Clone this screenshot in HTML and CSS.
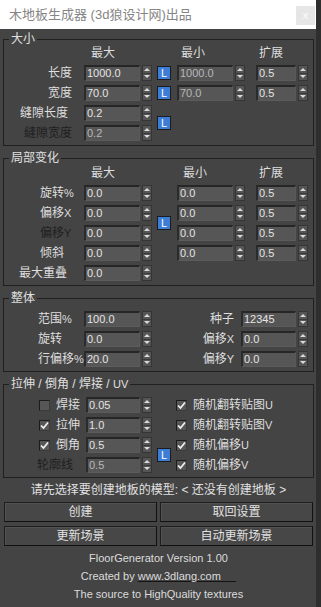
FILE: index.html
```html
<!DOCTYPE html>
<html lang="zh">
<head>
    <meta charset="UTF-8">
    <meta name="viewport" content="width=device-width, initial-scale=1.0">
    <title>木地板生成器</title>
    <link rel="stylesheet" href="styles.css">
</head>
<body>
    <div class="window">
        <div class="titlebar">
            <span class="title">木地板生成器 (3d狼设计网)出品</span>
            <span class="close">x</span>
        </div>

        <div class="panel">
            <!-- 大小 -->
            <fieldset class="group">
                <legend>大小</legend>
                <div class="grid cols-a first">
                    <span class="lbl"></span>
                    <span class="head c2">最大</span>
                    <span class="head c4">最小</span>
                    <span class="head c5">扩展</span>

                    <span class="lbl">长度</span>
                    <div class="spin"><span class="field">1000.0</span><span class="arrows"><i class="up"></i><i class="dn"></i></span></div>
                    <span class="lock">L</span>
                    <div class="spin"><span class="field dim">1000.0</span><span class="arrows"><i class="up"></i><i class="dn"></i></span></div>
                    <div class="spin narrow"><span class="field">0.5</span><span class="arrows"><i class="up"></i><i class="dn"></i></span></div>

                    <span class="lbl">宽度</span>
                    <div class="spin"><span class="field">70.0</span><span class="arrows"><i class="up"></i><i class="dn"></i></span></div>
                    <span class="lock">L</span>
                    <div class="spin"><span class="field dim">70.0</span><span class="arrows"><i class="up"></i><i class="dn"></i></span></div>
                    <div class="spin narrow"><span class="field">0.5</span><span class="arrows"><i class="up"></i><i class="dn"></i></span></div>

                    <span class="lbl shift">缝隙长度</span>
                    <div class="spin"><span class="field">0.2</span><span class="arrows"><i class="up"></i><i class="dn"></i></span></div>
                    <span class="lock span2">L</span>

                    <span class="lbl off">缝隙宽度</span>
                    <div class="spin"><span class="field dim">0.2</span><span class="arrows"><i class="up"></i><i class="dn"></i></span></div>
                </div>
            </fieldset>

            <!-- 局部变化 -->
            <fieldset class="group">
                <legend>局部变化</legend>
                <div class="grid cols-a second">
                    <span class="lbl"></span>
                    <span class="head c2">最大</span>
                    <span class="head c4 h2">最小</span>
                    <span class="head c5">扩展</span>

                    <span class="lbl left">旋转<span class="lat">%</span></span>
                    <div class="spin"><span class="field">0.0</span><span class="arrows"><i class="up"></i><i class="dn"></i></span></div>
                    <div class="spin c4"><span class="field">0.0</span><span class="arrows"><i class="up"></i><i class="dn"></i></span></div>
                    <div class="spin narrow"><span class="field">0.5</span><span class="arrows"><i class="up"></i><i class="dn"></i></span></div>

                    <span class="lbl left">偏移<span class="lat">X</span></span>
                    <div class="spin"><span class="field">0.0</span><span class="arrows"><i class="up"></i><i class="dn"></i></span></div>
                    <span class="lock span2">L</span>
                    <div class="spin"><span class="field">0.0</span><span class="arrows"><i class="up"></i><i class="dn"></i></span></div>
                    <div class="spin narrow"><span class="field">0.5</span><span class="arrows"><i class="up"></i><i class="dn"></i></span></div>

                    <span class="lbl left off">偏移<span class="lat">Y</span></span>
                    <div class="spin"><span class="field">0.0</span><span class="arrows"><i class="up"></i><i class="dn"></i></span></div>
                    <div class="spin c4"><span class="field">0.0</span><span class="arrows"><i class="up"></i><i class="dn"></i></span></div>
                    <div class="spin narrow"><span class="field">0.5</span><span class="arrows"><i class="up"></i><i class="dn"></i></span></div>

                    <span class="lbl left">倾斜</span>
                    <div class="spin"><span class="field">0.0</span><span class="arrows"><i class="up"></i><i class="dn"></i></span></div>
                    <div class="spin c4"><span class="field">0.0</span><span class="arrows"><i class="up"></i><i class="dn"></i></span></div>
                    <div class="spin narrow"><span class="field">0.5</span><span class="arrows"><i class="up"></i><i class="dn"></i></span></div>

                    <span class="lbl left wide">最大重叠</span>
                    <div class="spin"><span class="field">0.0</span><span class="arrows"><i class="up"></i><i class="dn"></i></span></div>
                </div>
            </fieldset>

            <!-- 整体 -->
            <fieldset class="group">
                <legend>整体</legend>
                <div class="grid cols-b">
                    <span class="lbl left2">范围<span class="lat">%</span></span>
                    <div class="spin"><span class="field">100.0</span><span class="arrows"><i class="up"></i><i class="dn"></i></span></div>
                    <span class="rlbl">种子</span>
                    <div class="spin mid"><span class="field">12345</span><span class="arrows"><i class="up"></i><i class="dn"></i></span></div>

                    <span class="lbl left2">旋转</span>
                    <div class="spin"><span class="field">0.0</span><span class="arrows"><i class="up"></i><i class="dn"></i></span></div>
                    <span class="rlbl">偏移<span class="lat">X</span></span>
                    <div class="spin mid"><span class="field">0.0</span><span class="arrows"><i class="up"></i><i class="dn"></i></span></div>

                    <span class="lbl left2">行偏移<span class="lat">%</span></span>
                    <div class="spin"><span class="field">20.0</span><span class="arrows"><i class="up"></i><i class="dn"></i></span></div>
                    <span class="rlbl">偏移<span class="lat">Y</span></span>
                    <div class="spin mid"><span class="field">0.0</span><span class="arrows"><i class="up"></i><i class="dn"></i></span></div>
                </div>
            </fieldset>

            <!-- 拉伸 / 倒角 / 焊接 / UV -->
            <fieldset class="group">
                <legend>拉伸 / 倒角 / 焊接 / <span class="lat">UV</span></legend>
                <div class="grid cols-c">
                    <span class="opt"><span class="chk"></span><span>焊接</span></span>
                    <div class="spin short"><span class="field">0.05</span><span class="arrows"><i class="up"></i><i class="dn"></i></span></div>
                    <span class="opt right"><span class="chk"><svg width="9" height="9" viewBox="0 0 9 9"><path d="M1 4.5 L3.5 7 L8 1.5" fill="none" stroke="#f2f2f2" stroke-width="1.7"/></svg></span><span>随机翻转贴图<span class="lat">U</span></span></span>

                    <span class="opt"><span class="chk"><svg width="9" height="9" viewBox="0 0 9 9"><path d="M1 4.5 L3.5 7 L8 1.5" fill="none" stroke="#f2f2f2" stroke-width="1.7"/></svg></span><span>拉伸</span></span>
                    <div class="spin short"><span class="field">1.0</span><span class="arrows"><i class="up"></i><i class="dn"></i></span></div>
                    <span class="opt right"><span class="chk"><svg width="9" height="9" viewBox="0 0 9 9"><path d="M1 4.5 L3.5 7 L8 1.5" fill="none" stroke="#f2f2f2" stroke-width="1.7"/></svg></span><span>随机翻转贴图<span class="lat">V</span></span></span>

                    <span class="opt"><span class="chk"><svg width="9" height="9" viewBox="0 0 9 9"><path d="M1 4.5 L3.5 7 L8 1.5" fill="none" stroke="#f2f2f2" stroke-width="1.7"/></svg></span><span>倒角</span></span>
                    <div class="spin short"><span class="field">0.5</span><span class="arrows"><i class="up"></i><i class="dn"></i></span></div>
                    <span class="lock span2">L</span>
                    <span class="opt right"><span class="chk"><svg width="9" height="9" viewBox="0 0 9 9"><path d="M1 4.5 L3.5 7 L8 1.5" fill="none" stroke="#f2f2f2" stroke-width="1.7"/></svg></span><span>随机偏移<span class="lat">U</span></span></span>

                    <span class="opt off outline">轮廓线</span>
                    <div class="spin short"><span class="field dim">0.5</span><span class="arrows"><i class="up"></i><i class="dn"></i></span></div>
                    <span class="opt right"><span class="chk"><svg width="9" height="9" viewBox="0 0 9 9"><path d="M1 4.5 L3.5 7 L8 1.5" fill="none" stroke="#f2f2f2" stroke-width="1.7"/></svg></span><span>随机偏移<span class="lat">V</span></span></span>
                </div>
            </fieldset>

            <p class="status">请先选择要创建地板的模型: &lt; 还没有创建地板 &gt;</p>

            <div class="btns">
                <button class="btn">创建</button>
                <button class="btn">取回设置</button>
                <button class="btn">更新场景</button>
                <button class="btn">自动更新场景</button>
            </div>

            <div class="credits">
                <p>FloorGenerator Version 1.00</p>
                <p>Created by <a href="#">www.3dlang.com&nbsp;&nbsp;&nbsp;&nbsp;&nbsp;</a></p>
                <p>The source to HighQuality textures</p>
            </div>
        </div>
    </div>
</body>
</html>
```

FILE: styles.css
```css
* {
    box-sizing: border-box;
}

body {
    margin: 0;
    background: #2e2e2e;
    font-family: "Liberation Sans", "Noto Sans CJK SC", sans-serif;
    font-size: 12px;
    color: #dedede;
}

.window {
    width: 316px;
    height: 607px;
    background: #444;
    display: flex;
    flex-direction: column;
}

.titlebar {
    height: 29px;
    background: #fff;
    display: flex;
    align-items: center;
    justify-content: space-between;
    padding: 1px 1px 0 9px;
}

.title {
    color: #858585;
    font-size: 13px;
    line-height: 16px;
}

.close {
    width: 19px;
    height: 19px;
    background: #e6e6e6;
    color: #fcfcfc;
    font-size: 11px;
    display: flex;
    align-items: center;
    justify-content: center;
}

.panel {
    padding: 3px 2px 0 3px;
}

.group {
    margin: 0 0 5px;
    padding: 0 0 2px;
    border: 1px solid #202020;
    min-width: 0;
}

.group legend {
    margin-left: 5px;
    padding: 0 2px;
    line-height: 14px;
    color: #e0e0e0;
}

.lat {
    font-size: 11px;
}

/* rows */
.grid {
    display: grid;
    grid-auto-rows: 20px;
    align-items: center;
    line-height: 14px;
}

.cols-a {
    grid-template-columns: 80px 68px 25px 79px 52px;
}

.first {
    margin-top: -3px;
}

.second {
    margin-top: -2px;
}

.cols-b {
    grid-template-columns: 80px 68px 89px 67px;
    margin-top: 4px;
}

.cols-c {
    grid-template-columns: 82px 66px 24px 1fr;
    margin-top: 4px;
}

.c2 {
    grid-column: 2;
    padding-left: 7px;
}

.c4 {
    grid-column: 4;
}

.head.c4 {
    padding-left: 4px;
}

.head.h2 {
    padding-left: 6px;
}

.c5 {
    grid-column: 5;
    padding-left: 3px;
}

.lbl {
    grid-column: 1;
    text-align: right;
    padding-right: 12px;
    white-space: nowrap;
}

.lbl.shift {
    padding-right: 16px;
}

.lbl.left {
    text-align: left;
    padding: 0 0 0 36px;
}

.lbl.left.wide {
    padding-left: 15px;
}

.lbl.left2 {
    text-align: left;
    padding: 0 0 0 34px;
}

.rlbl {
    text-align: right;
    padding-right: 7px;
}

.off {
    color: #1f1f1f;
}

/* spinner */
.spin {
    display: flex;
    align-items: center;
    gap: 2px;
}

.field {
    width: 56px;
    height: 16px;
    background: #565656;
    border-top: 2px solid #262626;
    border-left: 2px solid #2b2b2b;
    border-bottom: 1px solid #5c5c5c;
    border-right: 1px solid #595959;
    padding-left: 1px;
    font-size: 11px;
    line-height: 13px;
    color: #e4e4e4;
}

.field.dim {
    color: #b8b8b8;
}

.spin.narrow .field {
    width: 40px;
}

.spin.mid .field {
    width: 55px;
}

.spin.short .field {
    width: 54px;
}

.arrows {
    width: 10px;
    height: 16px;
    display: flex;
    flex-direction: column;
    background: #555;
    border: 1px solid #353535;
}

.arrows i {
    flex: 1;
    display: flex;
    align-items: center;
    justify-content: center;
}

.arrows i::before {
    content: "";
    border-left: 3px solid transparent;
    border-right: 3px solid transparent;
}

.arrows .up::before {
    border-bottom: 3px solid #dadada;
}

.arrows .dn {
    border-top: 1px solid #3a3a3a;
}

.arrows .dn::before {
    border-top: 3px solid #dadada;
}

/* lock button */
.lock {
    width: 14px;
    height: 14px;
    margin-left: 5px;
    background: #3d7dd8;
    border: 1px solid #1c1c1c;
    color: #fff;
    font-size: 11px;
    line-height: 12px;
    text-align: center;
}

.lock.span2 {
    grid-row: span 2;
}

/* checkboxes */
.opt {
    grid-column: 1;
    display: flex;
    align-items: center;
    justify-content: flex-end;
    gap: 6px;
    padding-right: 6px;
    white-space: nowrap;
}

.opt.outline {
    padding-right: 13px;
}

.opt.right {
    grid-column: 4;
    justify-content: flex-start;
    padding-right: 0;
}

.chk {
    width: 11px;
    height: 11px;
    background: #575757;
    border-top: 1px solid #1c1c1c;
    border-left: 1px solid #1c1c1c;
    border-bottom: 1px solid #3a3a3a;
    border-right: 1px solid #3a3a3a;
    display: flex;
    align-items: center;
    justify-content: center;
}

.chk svg {
    display: block;
}

/* bottom */
.status {
    margin: 0;
    text-align: center;
    line-height: 14px;
    color: #e0e0e0;
}

.btns {
    display: grid;
    grid-template-columns: 1fr 1fr;
    gap: 4px 3px;
    margin: 5px 1px 0 1px;
}

.btn {
    height: 20px;
    padding: 0;
    background: #474747;
    border: 1px solid #1e1e1e;
    border-bottom-color: #111;
    border-right-color: #111;
    box-shadow: inset 1px 1px 0 #525252;
    color: #e2e2e2;
    font: inherit;
    line-height: 17px;
}

.credits {
    margin-top: 3px;
    text-align: center;
    font-size: 11px;
    line-height: 18px;
    color: #dcdcdc;
}

.credits p {
    margin: 0;
}

.credits a {
    color: #dcdcdc;
    text-decoration: underline;
    text-decoration-color: #141414;
}
```
